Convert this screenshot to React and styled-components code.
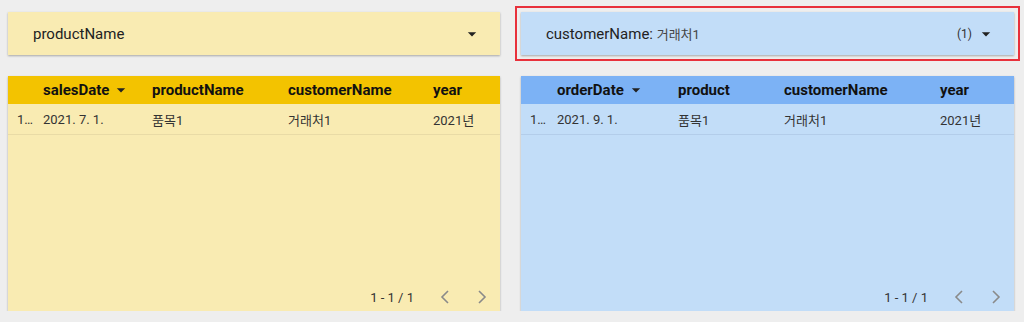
import React from 'react';
import styled, { createGlobalStyle } from 'styled-components';

const themes = {
  yellow: { light: '#f9ebb2', head: '#f3c300', line: '#e9dba6' },
  blue: { light: '#c2ddf8', head: '#7cb2f5', line: '#b3cdea' },
};

const GlobalStyle = createGlobalStyle`
  body {
    margin: 0;
    background: #eeeeee;
    font-family: Roboto, "Noto Sans CJK KR", sans-serif;
    color: #212121;
  }
`;

const Page = styled.div`
  display: grid;
  grid-template-columns: 492px 493px;
  grid-template-rows: 43px 235px;
  column-gap: 21px;
  row-gap: 21px;
  padding: 12px 10px 0 8px;
`;

const Filter = styled.div`
  display: flex;
  align-items: center;
  background: ${p => themes[p.tone].light};
  box-shadow: 0 1px 2px rgba(0, 0, 0, 0.3);
  padding: 0 18px 0 25px;
  outline: ${p => (p.selected ? '2px solid #e8313b' : 'none')};
  outline-offset: 4px;
`;

const FilterLabel = styled.div`
  flex: 1;
  font-size: 15px;
  color: #222;
`;

const FilterValue = styled.span`
  font-size: 13px;
  color: #444;
`;

const Count = styled.span`
  font-size: 12px;
  color: #333;
  margin-right: 4px;
`;

const Arrow = ({ size = 20 }) => (
  <svg width={size} height={size} viewBox="0 0 24 24">
    <path d="M7 10l5 5 5-5z" fill="#222" />
  </svg>
);

const Table = styled.div`
  display: flex;
  flex-direction: column;
  background: ${p => themes[p.tone].light};
  box-shadow: 0 1px 2px rgba(0, 0, 0, 0.3);
`;

const Row = styled.div`
  display: grid;
  grid-template-columns: ${p => p.cols};
  align-items: center;
`;

const HeadRow = styled(Row)`
  height: 28px;
  background: ${p => themes[p.tone].head};
  font-size: 15px;
  font-weight: 700;
  color: #111;
`;

const BodyRow = styled(Row)`
  height: 30px;
  font-size: 13px;
  color: #333;
  border-bottom: 1px solid ${p => themes[p.tone].line};
`;

const HeadCell = styled.div`
  display: flex;
  align-items: center;
  white-space: nowrap;
`;

const SortIcon = styled.span`
  display: inline-flex;
  margin-left: 2px;
`;

const Index = styled.div`
  padding-left: 9px;
  white-space: nowrap;
`;

const Spacer = styled.div`
  flex: 1;
`;

const Footer = styled.div`
  height: 28px;
  display: flex;
  align-items: center;
  justify-content: flex-end;
  padding-right: 6px;
  font-size: 13px;
  color: #333;
`;

const PageText = styled.span`
  margin-right: 19px;
`;

const NavButton = styled.div`
  width: 24px;
  height: 24px;
  display: flex;
  align-items: center;
  justify-content: center;
  & + & {
    margin-left: 13px;
  }
`;

const Chevron = ({ dir }) => (
  <svg width="10" height="14" viewBox="0 0 10 14">
    <polyline
      points={dir === 'left' ? '8,1 2,7 8,13' : '2,1 8,7 2,13'}
      fill="none"
      stroke="#8a8a8a"
      strokeWidth="1.6"
    />
  </svg>
);

const DataTable = ({ tone, cols, headers, row }) => (
  <Table tone={tone}>
    <HeadRow tone={tone} cols={cols}>
      <div />
      {headers.map((h, i) => (
        <HeadCell key={h}>
          {h}
          {i === 0 && (
            <SortIcon>
              <Arrow size={20} />
            </SortIcon>
          )}
        </HeadCell>
      ))}
    </HeadRow>
    <BodyRow tone={tone} cols={cols}>
      <Index>1…</Index>
      {row.map((c, i) => (
        <div key={i}>{c}</div>
      ))}
    </BodyRow>
    <Spacer />
    <Footer>
      <PageText>1 - 1 / 1</PageText>
      <NavButton>
        <Chevron dir="left" />
      </NavButton>
      <NavButton>
        <Chevron dir="right" />
      </NavButton>
    </Footer>
  </Table>
);

const App = () => (
  <>
    <GlobalStyle />
    <Page>
      <Filter tone="yellow">
        <FilterLabel>productName</FilterLabel>
        <Arrow />
      </Filter>
      <Filter tone="blue" selected>
        <FilterLabel>
          customerName: <FilterValue>거래처1</FilterValue>
        </FilterLabel>
        <Count>(1)</Count>
        <Arrow />
      </Filter>
      <DataTable
        tone="yellow"
        cols="35px 109px 136px 145px 67px"
        headers={['salesDate', 'productName', 'customerName', 'year']}
        row={['2021. 7. 1.', '품목1', '거래처1', '2021년']}
      />
      <DataTable
        tone="blue"
        cols="36px 121px 106px 156px 74px"
        headers={['orderDate', 'product', 'customerName', 'year']}
        row={['2021. 9. 1.', '품목1', '거래처1', '2021년']}
      />
    </Page>
  </>
);

export default App;
